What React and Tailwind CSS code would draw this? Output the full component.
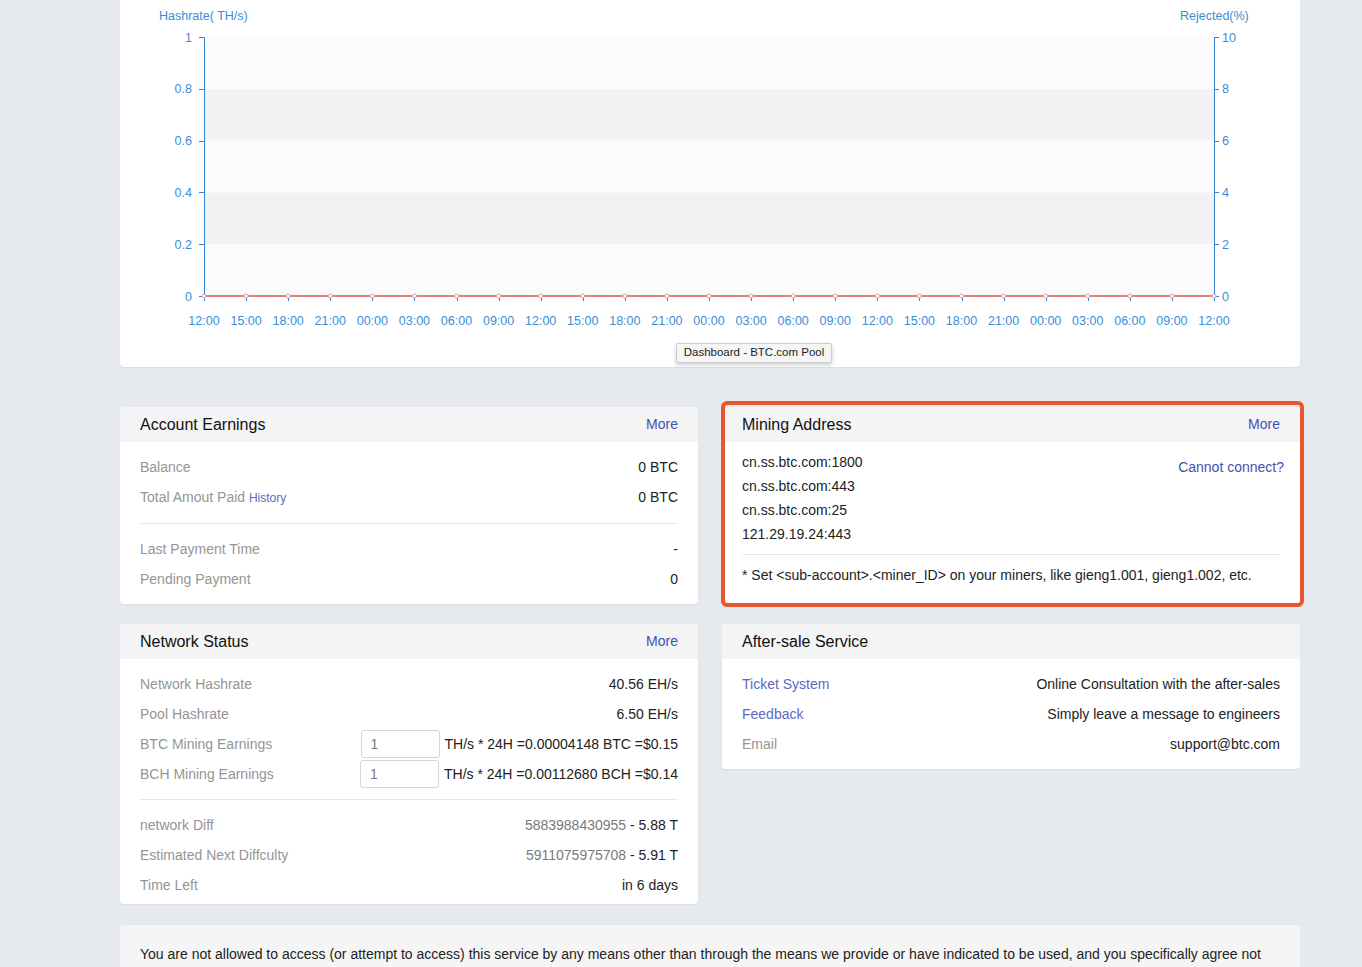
import React from "react";

const FONT = "'Liberation Sans', Arial, sans-serif";
const AXIS_TEXT = "#3a8ed6";
const AXIS_LINE = "#2f86d5";

const xLabels = [
  "12:00","15:00","18:00","21:00","00:00","03:00","06:00","09:00",
  "12:00","15:00","18:00","21:00","00:00","03:00","06:00","09:00",
  "12:00","15:00","18:00","21:00","00:00","03:00","06:00","09:00",
  "12:00",
];

function Chart() {
  const x0 = 84;
  const x1 = 1094;
  const yTop = 37;
  const yBot = 296;
  const xs = xLabels.map((_, i) => x0 + (i * (x1 - x0)) / 24);
  const ys = [0, 1, 2, 3, 4, 5].map((i) => yBot - (i * (yBot - yTop)) / 5);
  const left = ["0", "0.2", "0.4", "0.6", "0.8", "1"];
  const right = ["0", "2", "4", "6", "8", "10"];
  return (
    <svg width="1180" height="367" className="block" style={{ fontFamily: FONT }}>
      {[0, 1, 2, 3, 4].map((i) => (
        <rect
          key={i}
          x={x0}
          y={ys[i + 1]}
          width={x1 - x0}
          height={ys[i] - ys[i + 1]}
          fill={i % 2 === 0 ? "#fbfbfb" : "#f2f2f2"}
        />
      ))}
      <text x="39" y="19.5" fontSize="12.5" fill={AXIS_TEXT}>Hashrate( TH/s)</text>
      <text x="1060" y="19.5" fontSize="12.5" fill={AXIS_TEXT}>Rejected(%)</text>
      <line x1={x0 + 0.5} y1={yTop} x2={x0 + 0.5} y2={yBot} stroke={AXIS_LINE} strokeWidth="1" />
      {ys.map((y, i) => (
        <g key={"l" + i}>
          <line x1={x0 - 5} y1={Math.round(y) + 0.5} x2={x0} y2={Math.round(y) + 0.5} stroke={AXIS_LINE} />
          <text x="72" y={y + 4.5} fontSize="12.5" fill={AXIS_TEXT} textAnchor="end">{left[i]}</text>
        </g>
      ))}
      <line x1={x1 + 0.5} y1={yTop} x2={x1 + 0.5} y2={yBot} stroke={AXIS_LINE} strokeWidth="1" />
      {ys.map((y, i) => (
        <g key={"r" + i}>
          <line x1={x1} y1={Math.round(y) + 0.5} x2={x1 + 5} y2={Math.round(y) + 0.5} stroke={AXIS_LINE} />
          <text x="1102" y={y + 4.5} fontSize="12.5" fill={AXIS_TEXT}>{right[i]}</text>
        </g>
      ))}
      <line x1={x0} y1={yBot + 0.5} x2={x1} y2={yBot + 0.5} stroke={AXIS_LINE} />
      {xs.map((x, i) => (
        <g key={"x" + i}>
          <line x1={Math.round(x) + 0.5} y1={yBot} x2={Math.round(x) + 0.5} y2={yBot + 5} stroke={AXIS_LINE} />
          <text x={x} y={yBot + 28.5} fontSize="12.5" fill={AXIS_TEXT} textAnchor="middle">{xLabels[i]}</text>
        </g>
      ))}
      <line x1={x0} y1={yBot} x2={x1} y2={yBot} stroke="#e57f78" strokeWidth="2" />
      {xs.map((x, i) => (
        <circle key={"c" + i} cx={x} cy={yBot} r="2" fill="#fff" stroke="#dba2a2" strokeWidth="1" />
      ))}
    </svg>
  );
}

function CardHeader({ title, more }) {
  return (
    <div className="h-[35px] bg-[#f4f4f4] rounded-t-[4px] px-5 flex items-center justify-between">
      <span className="text-[16px] text-[#111]">{title}</span>
      {more && <span className="text-[14px] text-[#3f51b5]">More</span>}
    </div>
  );
}

function Row({ label, children, labelClass = "text-[#959595]" }) {
  return (
    <div className="h-[30px] flex items-center justify-between text-[14px]">
      <span className={labelClass}>{label}</span>
      <span className="text-[#222]">{children}</span>
    </div>
  );
}

function Card({ children, className = "" }) {
  return (
    <div className={"bg-white rounded-[4px] shadow-[0_1px_2px_rgba(0,0,0,0.06)] " + className}>
      {children}
    </div>
  );
}

function InputBox() {
  return (
    <div className="w-[79px] h-[28px] border border-[#d6d6d6] rounded-[3px] pl-[9px] flex items-center text-[#777] bg-white">
      1
    </div>
  );
}

export default function App() {
  return (
    <div className="h-[967px] overflow-hidden bg-[#e6e9ed]" style={{ fontFamily: FONT }}>
      <div className="ml-[120px] w-[1180px]">
        {/* Chart card */}
        <div className="relative bg-white rounded-b-[4px] shadow-[0_1px_2px_rgba(0,0,0,0.06)]">
          <Chart />
          <div className="absolute left-[556px] top-[343px] h-[20px] w-[156px] flex items-center justify-center bg-[#f5f5f5] border border-[#cdcdcd] rounded-[2px] shadow-[0_2px_4px_rgba(0,0,0,0.2)] text-[11.5px] text-[#222]">
            Dashboard - BTC.com Pool
          </div>
        </div>

        <div className="mt-10 grid grid-cols-2 gap-x-6 gap-y-5">
          {/* Account Earnings */}
          <Card>
            <CardHeader title="Account Earnings" more />
            <div className="px-5 pt-[10px] pb-[10px]">
              <Row label="Balance">0 BTC</Row>
              <Row
                label={
                  <span>
                    Total Amout Paid{" "}
                    <span className="text-[12px] text-[#5b6abf]">History</span>
                  </span>
                }
              >
                0 BTC
              </Row>
              <div className="h-px bg-[#e8e8e8] mt-[11px] mb-[10px]" />
              <Row label="Last Payment Time">-</Row>
              <Row label="Pending Payment">0</Row>
            </div>
          </Card>

          {/* Mining Address */}
          <div className="relative">
            <Card className="h-full">
              <CardHeader title="Mining Address" more />
              <div className="px-5 pt-[8px] pb-[10px] text-[14px] text-[#222]">
                <div className="flex justify-between items-start">
                  <div className="flex flex-col">
                    <div className="h-[24px] flex items-center">cn.ss.btc.com:1800</div>
                    <div className="h-[24px] flex items-center">cn.ss.btc.com:443</div>
                    <div className="h-[24px] flex items-center">cn.ss.btc.com:25</div>
                    <div className="h-[24px] flex items-center">121.29.19.24:443</div>
                  </div>
                  <div className="mt-[7px] leading-[20px] mr-[-4px] text-[#3f51b5]">
                    Cannot connect?
                  </div>
                </div>
                <div className="h-px bg-[#e8e8e8] mt-[8px] mb-[10px]" />
                <div className="leading-[20px]">
                  * Set &lt;sub-account&gt;.&lt;miner_ID&gt; on your miners, like gieng1.001, gieng1.002, etc.
                </div>
              </div>
            </Card>
            <div className="absolute -left-[1px] -right-[4px] -top-[6px] -bottom-[3px] border-[4px] border-[#e9552f] rounded-[6px] pointer-events-none" />
          </div>

          {/* Network Status */}
          <Card>
            <CardHeader title="Network Status" more />
            <div className="px-5 pt-[10px] pb-[4px]">
              <Row label="Network Hashrate">40.56 EH/s</Row>
              <Row label="Pool Hashrate">6.50 EH/s</Row>
              <div className="h-[30px] flex items-center justify-between text-[14px]">
                <span className="text-[#959595]">BTC Mining Earnings</span>
                <div className="flex items-center gap-[5px] text-[#222]">
                  <InputBox />
                  <span>TH/s * 24H =0.00004148 BTC =$0.15</span>
                </div>
              </div>
              <div className="h-[30px] flex items-center justify-between text-[14px]">
                <span className="text-[#959595]">BCH Mining Earnings</span>
                <div className="flex items-center gap-[5px] text-[#222]">
                  <InputBox />
                  <span>TH/s * 24H =0.00112680 BCH =$0.14</span>
                </div>
              </div>
              <div className="h-px bg-[#e8e8e8] my-[10px]" />
              <Row label="network Diff">
                <span className="text-[#7a7a7a]">5883988430955</span> - 5.88 T
              </Row>
              <Row label="Estimated Next Diffculty">
                <span className="text-[#7a7a7a]">5911075975708</span> - 5.91 T
              </Row>
              <Row label="Time Left">in 6 days</Row>
            </div>
          </Card>

          {/* After-sale Service */}
          <Card className="self-start">
            <CardHeader title="After-sale Service" />
            <div className="px-5 pt-[10px] pb-[10px]">
              <Row label="Ticket System" labelClass="text-[#5b6abf]">
                Online Consultation with the after-sales
              </Row>
              <Row label="Feedback" labelClass="text-[#5b6abf]">
                Simply leave a message to engineers
              </Row>
              <Row label="Email">support@btc.com</Row>
            </div>
          </Card>
        </div>

        {/* Footer notice */}
        <div className="mt-[21px] bg-[#f5f5f5] rounded-[4px] pl-5 pr-[26px] pt-[19px] pb-5 text-[14px] leading-[20px] text-[#222]">
          You are not allowed to access (or attempt to access) this service by any means other than through the means we provide or have indicated to be used, and you specifically agree not to access (or attempt to access) this service through any automated means (including use of scripts or web crawlers).
        </div>
      </div>
    </div>
  );
}
